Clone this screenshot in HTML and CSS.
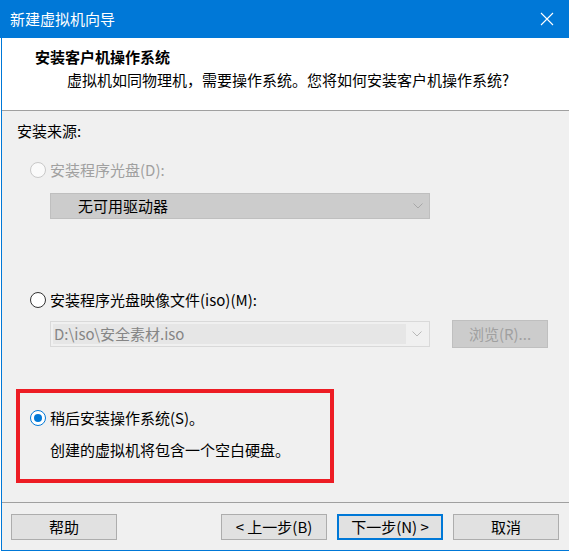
FILE: index.html
```html
<!DOCTYPE html>
<html lang="zh-CN">
<head>
<meta charset="utf-8">
<title>新建虚拟机向导</title>
<link rel="stylesheet" href="styles.css">
</head>
<body>
<div class="titlebar">
  <span class="title">新建虚拟机向导</span>
  <svg class="close" width="14" height="14" viewBox="0 0 14 14"><path d="M1 1 L13 13 M13 1 L1 13" stroke="#fff" stroke-width="1.1" fill="none"/></svg>
</div>
<div class="frame">
  <div class="header">
    <div class="h-title">安装客户机操作系统</div>
    <div class="h-sub">虚拟机如同物理机，需要操作系统。您将如何安装客户机操作系统?</div>
  </div>
  <div class="body">
    <div class="label">安装来源:</div>
    <div class="radio-row row-disc disabled"><span class="radio"></span><span>安装程序光盘(D):</span></div>
    <div class="combo combo-disabled">
      <span class="combo-text">无可用驱动器</span>
      <svg class="chev" width="10" height="6" viewBox="0 0 10 6"><path d="M0.5 0.5 L5 5 L9.5 0.5" stroke="#a8a8a8" stroke-width="1" fill="none"/></svg>
    </div>
    <div class="radio-row row-iso"><span class="radio"></span><span>安装程序光盘映像文件(iso)(M):</span></div>
    <div class="iso-row">
      <div class="combo combo-edit">
        <span class="edit">D:\iso\安全素材.iso</span>
        <svg class="chev" width="10" height="6" viewBox="0 0 10 6"><path d="M0.5 0.5 L5 5 L9.5 0.5" stroke="#b8b8b8" stroke-width="1" fill="none"/></svg>
      </div>
      <div class="btn btn-disabled">浏览(R)...</div>
    </div>
    <div class="later-box">
      <div class="radio-row"><span class="radio checked"></span><span>稍后安装操作系统(S)。</span></div>
      <div class="note">创建的虚拟机将包含一个空白硬盘。</div>
    </div>
  </div>
  <div class="footer">
    <div class="btn">帮助</div>
    <div class="spacer"></div>
    <div class="btn">&lt; 上一步(B)</div>
    <div class="btn btn-default">下一步(N) &gt;</div>
    <div class="btn">取消</div>
  </div>
</div>
</body>
</html>
```
FILE: styles.css
```css
* { box-sizing: border-box; }
html, body { margin: 0; padding: 0; }
body {
  width: 569px;
  height: 552px;
  background: #ffffff;
  font-family: "Noto Sans CJK SC", "Noto Sans", sans-serif;
  font-size: 15px;
  line-height: 20px;
  color: #000;
  overflow: hidden;
}
.titlebar {
  height: 38px;
  background: #0078d7;
  display: flex;
  align-items: center;
  padding-left: 10px;
  padding-right: 15px;
}
.title { color: #fff; flex: 1; }
.close { display: block; }

.frame {
  margin-left: 1px;
  border-left: 1px solid #0078d7;
  border-bottom: 1px solid #0078d7;
  height: 513px;
  background: #f0f0f0;
  display: flex;
  flex-direction: column;
}
.header {
  height: 73px;
  background: #fff;
  border-bottom: 1px solid #a0a0a0;
  padding: 9px 0 0 33px;
}
.h-title { font-weight: bold; }
.h-sub { margin-left: 32px; margin-top: 3px; }

.body { padding: 10px 0 0 15px; }
.radio-row {
  display: flex;
  align-items: center;
  padding-left: 13px;
  height: 20px;
}
.radio {
  width: 16px;
  height: 16px;
  border-radius: 50%;
  border: 1px solid #333;
  background: #fff;
  margin-right: 4px;
  flex: none;
  position: relative;
}
.disabled { color: #a0a0a0; }
.disabled .radio { border-color: #c8c8c8; background: #fafafa; }
.radio.checked { border: 1.5px solid #0078d7; }
.radio.checked::after {
  content: "";
  position: absolute;
  left: 2.5px; top: 2.5px;
  width: 8px; height: 8px;
  border-radius: 50%;
  background: #0078d7;
}
.row-disc { margin-top: 19px; }
.row-iso { margin-top: 71px; }

.combo {
  width: 380px;
  height: 26px;
  margin-left: 33px;
  display: flex;
  align-items: center;
  position: relative;
}
.combo-disabled {
  margin-top: 13px;
  background: #cccccc;
  border: 1px solid #bfbfbf;
  padding-left: 27px;
}
.combo-text { flex: 1; }
.chev { flex: none; margin-right: 6px; }
.iso-row {
  margin-top: 10px;
  display: flex;
  align-items: center;
  height: 28px;
}
.combo-edit {
  background: #f0f0f0;
  border: 1px solid #d9d9d9;
  padding: 2px;
}
.combo-edit .chev { margin-right: 5px; }
.edit {
  flex: 1;
  height: 20px;
  background: #e6e6e6;
  color: #858585;
  padding-left: 1px;
  margin-right: 6px;
}
.btn {
  width: 106px;
  height: 26px;
  background: #e1e1e1;
  border: 1px solid #adadad;
  display: flex;
  align-items: center;
  justify-content: center;
  flex: none;
}
.btn-disabled {
  margin-left: 22px;
  width: 96px;
  height: 28px;
  background: #cccccc;
  border-color: #bfbfbf;
  color: #a0a0a0;
}
.later-box {
  margin-top: 41px;
  margin-left: -1px;
  width: 318px;
  height: 94px;
  border: 4px solid #ed1c24;
  padding: 15px 0 0 10px;
}
.later-box .radio-row { padding-left: 0; }
.note { margin-top: 12px; margin-left: 20px; }

.footer {
  margin-top: auto;
  height: 48px;
  border-top: 1px solid #a0a0a0;
  display: flex;
  align-items: flex-start;
  padding: 11px 10px 0 9px;
  gap: 10px;
}
.spacer { flex: 1; }
.btn-default { border: 2px solid #0078d7; }
```
